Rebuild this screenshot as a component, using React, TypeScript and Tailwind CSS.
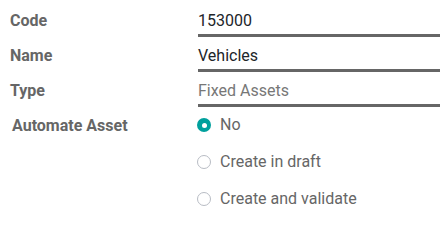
import React from "react";

const fields = [
  { label: "Code", value: "153000", muted: false },
  { label: "Name", value: "Vehicles", muted: false },
  { label: "Type", value: "Fixed Assets", muted: true },
];

const options = ["No", "Create in draft", "Create and validate"];

export default function App() {
  const selected = "No";

  return (
    <div className="h-[228px] w-[440px] bg-white pt-[11px] font-['Roboto',sans-serif] text-[16px]">
      {/* Fields */}
      <div className="flex flex-col gap-[9px]">
        {fields.map((f) => (
          <div key={f.label} className="grid grid-cols-[198px_1fr]">
            <div className="pl-[10px] font-bold leading-[20px] text-[#666666]">{f.label}</div>
            <div
              className={`border-b-[3px] border-[#666666] pb-[3px] leading-[20px] ${
                f.muted ? "text-[#777777]" : "text-[#212529]"
              }`}
            >
              {f.value}
            </div>
          </div>
        ))}
      </div>

      {/* Automate Asset */}
      <div className="mt-[8px] grid grid-cols-[197px_1fr]">
        <div className="pl-[12px] pt-[1px] font-bold leading-[20px] text-[#666666]">Automate Asset</div>
        <div className="flex flex-col gap-[17px]">
          {options.map((opt) => {
            const on = opt === selected;
            return (
              <label key={opt} className="flex items-center gap-[9px] leading-[20px] text-[#666666]">
                {on ? (
                  <span className="flex h-[14px] w-[14px] items-center justify-center rounded-full bg-[#00a09d]">
                    <span className="h-[5px] w-[5px] rounded-full bg-white" />
                  </span>
                ) : (
                  <span className="h-[14px] w-[14px] rounded-full border border-[#b8bcc4]" />
                )}
                {opt}
              </label>
            );
          })}
        </div>
      </div>
    </div>
  );
}
